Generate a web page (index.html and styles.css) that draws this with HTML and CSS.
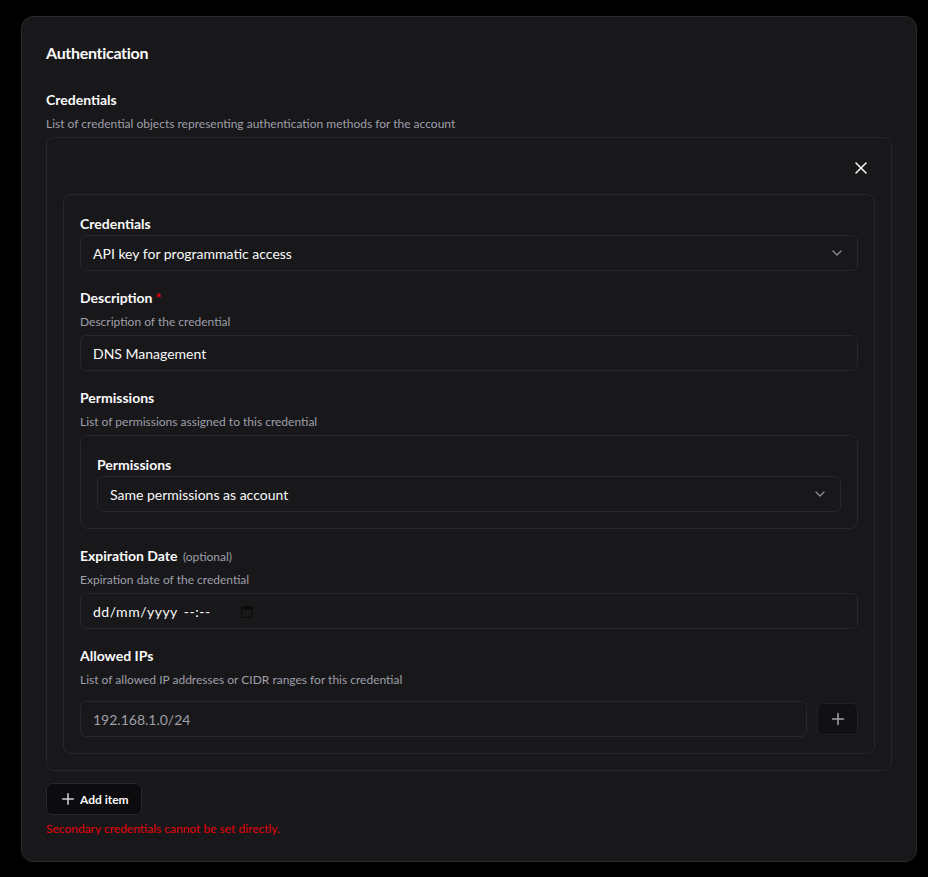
FILE: index.html
```html
<!DOCTYPE html>
<html lang="en">
<head>
<meta charset="utf-8">
<title>Authentication</title>
<link rel="stylesheet" href="styles.css">
</head>
<body>
<div class="page">
  <section class="card">
    <h2 class="title">Authentication</h2>

    <div class="section-head">
      <span class="label">Credentials</span>
      <p class="desc">List of credential objects representing authentication methods for the account</p>
    </div>

    <div class="item">
      <div class="item-bar">
        <button class="close-btn" type="button" aria-label="Remove item">
          <svg width="12" height="12" viewBox="0 0 12 12" fill="none" stroke="currentColor" stroke-width="1.5" stroke-linecap="round"><path d="M1 1l10 10M11 1L1 11"/></svg>
        </button>
      </div>

      <div class="panel">
        <div class="field">
          <span class="label">Credentials</span>
          <div class="select">
            <span>API key for programmatic access</span>
            <svg class="chev" width="16" height="16" viewBox="0 0 16 16" fill="none" stroke="currentColor" stroke-width="1.4" stroke-linecap="round" stroke-linejoin="round"><path d="M4 6l4 4 4-4"/></svg>
          </div>
        </div>

        <div class="field">
          <span class="label">Description<span class="req">*</span></span>
          <p class="desc">Description of the credential</p>
          <input class="input control" type="text" value="DNS Management">
        </div>

        <div class="field">
          <span class="label">Permissions</span>
          <p class="desc">List of permissions assigned to this credential</p>
          <div class="subpanel control">
            <span class="label">Permissions</span>
            <div class="select">
              <span>Same permissions as account</span>
              <svg class="chev" width="16" height="16" viewBox="0 0 16 16" fill="none" stroke="currentColor" stroke-width="1.4" stroke-linecap="round" stroke-linejoin="round"><path d="M4 6l4 4 4-4"/></svg>
            </div>
          </div>
        </div>

        <div class="field">
          <span class="label">Expiration Date <span class="opt">(optional)</span></span>
          <p class="desc">Expiration date of the credential</p>
          <div class="input date control">
            <span class="date-text">dd/mm/yyyy</span>
            <span class="time-text">--:--</span>
            <svg class="cal" width="12" height="13" viewBox="0 0 12 13"><rect x="0.5" y="1.5" width="11" height="11" rx="1.5" fill="none" stroke="#0b0b0c" stroke-width="1"/><rect x="1" y="2" width="10" height="2.5" fill="#0b0b0c"/></svg>
          </div>
        </div>

        <div class="field">
          <span class="label">Allowed IPs</span>
          <p class="desc">List of allowed IP addresses or CIDR ranges for this credential</p>
          <div class="array">
            <input class="input muted" type="text" value="192.168.1.0/24">
            <button class="plus-btn" type="button" aria-label="Add IP">
              <svg width="14" height="14" viewBox="0 0 14 14" fill="none" stroke="currentColor" stroke-width="1.5" stroke-linecap="round"><path d="M7 1.5v11M1.5 7h11"/></svg>
            </button>
          </div>
        </div>
      </div>
    </div>

    <button class="add-btn" type="button">
      <svg width="12" height="12" viewBox="0 0 12 12" fill="none" stroke="currentColor" stroke-width="1.5" stroke-linecap="round"><path d="M6 0.75v10.5M0.75 6h10.5"/></svg>
      <span>Add item</span>
    </button>
    <p class="error">Secondary credentials cannot be set directly.</p>
  </section>
</div>
</body>
</html>
```

FILE: styles.css
```css
* {
  box-sizing: border-box;
}

body {
  margin: 0;
  background: #000;
  color: #fafafa;
  font-family: Lato, "Noto Sans", "DejaVu Sans", sans-serif;
}

.page {
  padding: 16px 12px 16px 21px;
}

.card {
  width: 896px;
  background: #18181b;
  border: 1px solid #2a2a2e;
  border-radius: 12px;
  padding: 24px;
}

.title {
  margin: 0;
  font-size: 16px;
  line-height: 24px;
  font-weight: 700;
  letter-spacing: -0.3px;
}

.section-head {
  margin-top: 22px;
}

/* labels and hints sit 1px low inside their line boxes */
.label {
  display: block;
  font-size: 14px;
  line-height: 23px;
  height: 24px;
  padding-top: 1px;
  font-weight: 700;
  color: #fafafa;
}

.req {
  color: #e7000b;
  margin-left: 3px;
}

.opt {
  font-size: 12px;
  line-height: 0;
  font-weight: 400;
  color: #9f9fa9;
  margin-left: 2px;
}

.desc {
  margin: 4px 0 0;
  font-size: 12px;
  line-height: 15px;
  height: 16px;
  padding-top: 1px;
  color: #9f9fa9;
}

.item {
  margin-top: 6px;
  border: 1px solid #27272a;
  border-radius: 8px;
  padding: 16px;
}

.item-bar {
  display: flex;
  justify-content: flex-end;
  height: 28px;
  margin-bottom: 12px;
}

.close-btn {
  width: 28px;
  height: 28px;
  display: flex;
  align-items: center;
  justify-content: center;
  padding: 0;
  border: 0;
  background: transparent;
  color: #fafafa;
}

.panel {
  border: 1px solid #27272a;
  border-radius: 8px;
  padding: 16px;
  display: flex;
  flex-direction: column;
  gap: 14px;
}

.field {
  display: flex;
  flex-direction: column;
}

.control {
  margin-top: 6px;
}

.select,
.input {
  height: 36px;
  width: 100%;
  display: flex;
  align-items: center;
  justify-content: space-between;
  padding: 0 12px;
  border: 1px solid #27272a;
  border-radius: 6px;
  background: #18181b;
  color: #fafafa;
  font-family: inherit;
  font-size: 14px;
  outline: none;
}

.chev {
  color: #8a8a92;
}

.subpanel {
  border: 1px solid #27272a;
  border-radius: 8px;
  padding: 16px;
}

.date {
  justify-content: flex-start;
}

.date-text {
  letter-spacing: 0.5px;
}

.time-text {
  margin-left: 6px;
  width: 57px;
  letter-spacing: 0.5px;
}

.cal {
  display: block;
}

.array {
  margin-top: 14px;
  display: flex;
  align-items: center;
  gap: 10px;
}

.input.muted {
  color: #9f9fa9;
  flex: 1;
}

.plus-btn {
  flex: none;
  width: 41px;
  height: 32px;
  display: flex;
  align-items: center;
  justify-content: center;
  padding: 0;
  border: 1px solid #222225;
  border-radius: 6px;
  background: #111113;
  color: #a1a1aa;
}

.add-btn {
  margin-top: 12px;
  height: 32px;
  display: inline-flex;
  align-items: center;
  gap: 6px;
  padding: 0 12px 0 15px;
  border: 1px solid #27272a;
  border-radius: 6px;
  background: #0c0c0e;
  color: #fafafa;
  font-family: inherit;
  font-size: 12px;
  font-weight: 700;
}

.add-btn svg {
  color: #d4d4d8;
}

.error {
  margin: 6px 0 0;
  font-size: 12px;
  line-height: 16px;
  color: #e7000b;
}
```
